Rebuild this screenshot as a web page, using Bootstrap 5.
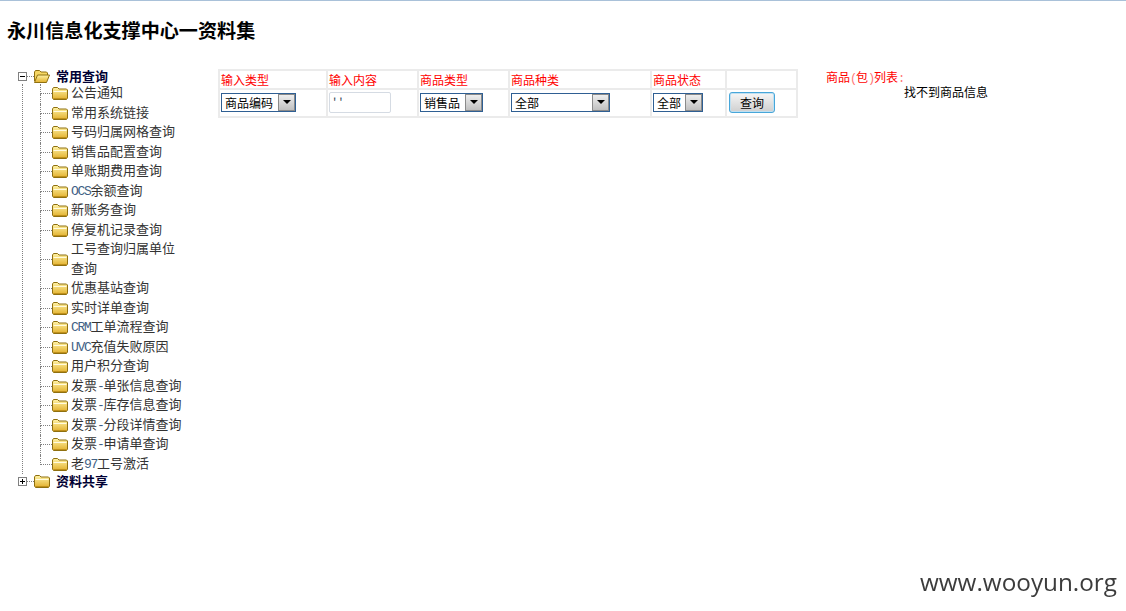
<!DOCTYPE html>
<html lang="zh">
<head>
<meta charset="utf-8">
<title>永川信息化支撑中心</title>
<link rel="stylesheet" href="https://cdn.jsdelivr.net/npm/bootstrap@5.3.0/dist/css/bootstrap.min.css">
<style>
html,body{height:100%}
body{background:#fff;border-top:1px solid #a9c1d9;font-family:"Liberation Mono","Noto Sans CJK SC",monospace;font-size:12px;color:#000;min-height:610px}
.site-title{font-family:"Liberation Serif","Noto Sans CJK SC",serif;font-size:19.1px;font-weight:700;line-height:22px;margin:20px 0 0 7px;color:#000}
.layout{padding:26px 0 0 18px}
.tree-col{width:167px;margin-right:33px;flex:none;font-size:13px;line-height:19.5px;color:#333}
.root-row{height:15px;font-weight:700;color:#003;line-height:15px;font-family:"Liberation Sans","Noto Sans CJK SC",sans-serif}
.root-row svg{flex:none}
.root-name{margin-left:6px}
.kids{margin:0 0 0 4px;padding:0;border-left:1px dotted #808080;list-style:none}
.kids-in{margin:0 0 0 17px;padding:0;list-style:none}
.link-col{width:12px;flex:none}
.link-top{flex:1;border-left:1px dotted #808080;border-bottom:1px dotted #808080}
.link-bot{flex:1;border-left:1px dotted #808080}
.kid:last-child .link-bot{border-left:0}
.kid svg{flex:none;margin-right:3px}
.lat-t{letter-spacing:-1.3px;color:#3f5f85}
.lat-r{font-family:"Liberation Mono",monospace;letter-spacing:-1.2px;color:#f77}
.grid-tb{width:578px;flex:none;table-layout:fixed;border-collapse:collapse;align-self:flex-start;font-family:"Noto Sans CJK SC",sans-serif}
.grid-tb td,.grid-tb th{border:2px solid #ebebeb;padding:0;font-weight:400;vertical-align:middle}
.grid-tb th{color:#f00;height:19px;line-height:17px;padding-left:1px}
.grid-tb td{height:28px;padding-bottom:2px}
.w-a{width:108px}.w-b{width:91px}.w-c{width:91px}.w-d{width:142px}.w-e{width:75px}.w-f{width:71px}
.pick{border:1px solid #2f5f93;height:19px;line-height:17px;background:#fff;padding-left:3px;margin-left:1px}
.pick-a{width:75px}.pick-c{width:63px}.pick-d{width:99px}.pick-e{width:50px}
.pick-txt{flex:1;white-space:nowrap;overflow:hidden}
.pick-btn{width:17px;flex:none;background:linear-gradient(#eee,#c0c0c0);border:1px solid #8a8a8a}
.pick-btn i{border:4px solid transparent;border-top:4px solid #000;border-bottom:0;display:block}
.txt-in{width:62px;height:21px;border:1px solid #d5dbe3;border-radius:2px;padding:0 3px;font:12px "Noto Sans CJK SC",sans-serif;letter-spacing:3px;margin-left:1px;display:block;color:#345}
.go-btn{width:46px;height:21px;margin-left:2px;padding:0;font-size:12px;line-height:17px;color:#000;border:1px solid #47a6d9;border-radius:3px;box-shadow:inset 0 0 0 1px #bfe0f2;background:linear-gradient(#f6f6f6,#cfcfcf);display:block;font-family:"Noto Sans CJK SC",sans-serif}
.result-col{margin-left:28px;font-family:"Noto Sans CJK SC",sans-serif;line-height:15px}
.result-lbl{color:#f00;height:15px}
.result-msg{margin-left:78px}
.mark-w{position:fixed;right:9px;bottom:15px;font-family:"Open Sans",sans-serif;font-size:24.3px;line-height:28px;color:#3c3c3c}
</style>
</head>
<body>
<svg width="0" height="0" class="d-block">
<defs>
<linearGradient id="fg" x1="0" y1="0" x2="0" y2="1"><stop offset="0" stop-color="#fff3a6"/><stop offset="1" stop-color="#e2b02c"/></linearGradient>
<symbol id="f-shut" viewBox="0 0 16 13"><path d="M.5 11V2L1.500.5h4L7 2h7.500l1 1v8l-1 1.500h-13z" fill="url(#fg)" stroke="#8f7010"/><path d="M1.500 4.500h13" stroke="#fffbe0"/><path d="M1.500 11.500h13" stroke="#c0901a"/></symbol>
<symbol id="f-open" viewBox="0 0 16 13"><path d="M.5 11V2l1-1.500h4L7 2h5.500l1 1v2" fill="#f6d765" stroke="#8f7010"/><path d="M.5 12.500L3.500 5h12l-3 7.500z" fill="url(#fg)" stroke="#8f7010"/></symbol>
</defs>
</svg>
<h1 class="site-title">永川信息化支撑中心一资料集</h1>
<div class="layout d-flex align-items-start">
  <nav class="tree-col">
    <div class="root-row d-flex align-items-center">
      <svg width="16" height="9" viewBox="0 0 16 9"><rect x=".5" y=".5" width="8" height="8" fill="#fff" stroke="#808080"/><path d="M2 4.500h5" stroke="#000"/><path d="M9 4.500h7" stroke="#808080" stroke-dasharray="1 1"/></svg>
      <svg width="16" height="13"><use href="#f-open"/></svg>
      <span class="root-name">常用查询</span>
    </div>
    <div class="kids">
      <ul class="kids-in">
        <li class="kid d-flex"><span class="link-col d-flex flex-column"><span class="link-top"></span><span class="link-bot"></span></span><svg class="align-self-center" width="16" height="13"><use href="#f-shut"/></svg><span>公告通知</span></li>
        <li class="kid d-flex"><span class="link-col d-flex flex-column"><span class="link-top"></span><span class="link-bot"></span></span><svg class="align-self-center" width="16" height="13"><use href="#f-shut"/></svg><span>常用系统链接</span></li>
        <li class="kid d-flex"><span class="link-col d-flex flex-column"><span class="link-top"></span><span class="link-bot"></span></span><svg class="align-self-center" width="16" height="13"><use href="#f-shut"/></svg><span>号码归属网格查询</span></li>
        <li class="kid d-flex"><span class="link-col d-flex flex-column"><span class="link-top"></span><span class="link-bot"></span></span><svg class="align-self-center" width="16" height="13"><use href="#f-shut"/></svg><span>销售品配置查询</span></li>
        <li class="kid d-flex"><span class="link-col d-flex flex-column"><span class="link-top"></span><span class="link-bot"></span></span><svg class="align-self-center" width="16" height="13"><use href="#f-shut"/></svg><span>单账期费用查询</span></li>
        <li class="kid d-flex"><span class="link-col d-flex flex-column"><span class="link-top"></span><span class="link-bot"></span></span><svg class="align-self-center" width="16" height="13"><use href="#f-shut"/></svg><span><span class="lat-t">OCS</span>余额查询</span></li>
        <li class="kid d-flex"><span class="link-col d-flex flex-column"><span class="link-top"></span><span class="link-bot"></span></span><svg class="align-self-center" width="16" height="13"><use href="#f-shut"/></svg><span>新账务查询</span></li>
        <li class="kid d-flex"><span class="link-col d-flex flex-column"><span class="link-top"></span><span class="link-bot"></span></span><svg class="align-self-center" width="16" height="13"><use href="#f-shut"/></svg><span>停复机记录查询</span></li>
        <li class="kid d-flex"><span class="link-col d-flex flex-column"><span class="link-top"></span><span class="link-bot"></span></span><svg class="align-self-center" width="16" height="13"><use href="#f-shut"/></svg><span>工号查询归属单位查询</span></li>
        <li class="kid d-flex"><span class="link-col d-flex flex-column"><span class="link-top"></span><span class="link-bot"></span></span><svg class="align-self-center" width="16" height="13"><use href="#f-shut"/></svg><span>优惠基站查询</span></li>
        <li class="kid d-flex"><span class="link-col d-flex flex-column"><span class="link-top"></span><span class="link-bot"></span></span><svg class="align-self-center" width="16" height="13"><use href="#f-shut"/></svg><span>实时详单查询</span></li>
        <li class="kid d-flex"><span class="link-col d-flex flex-column"><span class="link-top"></span><span class="link-bot"></span></span><svg class="align-self-center" width="16" height="13"><use href="#f-shut"/></svg><span><span class="lat-t">CRM</span>工单流程查询</span></li>
        <li class="kid d-flex"><span class="link-col d-flex flex-column"><span class="link-top"></span><span class="link-bot"></span></span><svg class="align-self-center" width="16" height="13"><use href="#f-shut"/></svg><span><span class="lat-t">UVC</span>充值失败原因</span></li>
        <li class="kid d-flex"><span class="link-col d-flex flex-column"><span class="link-top"></span><span class="link-bot"></span></span><svg class="align-self-center" width="16" height="13"><use href="#f-shut"/></svg><span>用户积分查询</span></li>
        <li class="kid d-flex"><span class="link-col d-flex flex-column"><span class="link-top"></span><span class="link-bot"></span></span><svg class="align-self-center" width="16" height="13"><use href="#f-shut"/></svg><span>发票<span class="lat-t">-</span>单张信息查询</span></li>
        <li class="kid d-flex"><span class="link-col d-flex flex-column"><span class="link-top"></span><span class="link-bot"></span></span><svg class="align-self-center" width="16" height="13"><use href="#f-shut"/></svg><span>发票<span class="lat-t">-</span>库存信息查询</span></li>
        <li class="kid d-flex"><span class="link-col d-flex flex-column"><span class="link-top"></span><span class="link-bot"></span></span><svg class="align-self-center" width="16" height="13"><use href="#f-shut"/></svg><span>发票<span class="lat-t">-</span>分段详情查询</span></li>
        <li class="kid d-flex"><span class="link-col d-flex flex-column"><span class="link-top"></span><span class="link-bot"></span></span><svg class="align-self-center" width="16" height="13"><use href="#f-shut"/></svg><span>发票<span class="lat-t">-</span>申请单查询</span></li>
        <li class="kid d-flex"><span class="link-col d-flex flex-column"><span class="link-top"></span><span class="link-bot"></span></span><svg class="align-self-center" width="16" height="13"><use href="#f-shut"/></svg><span>老<span class="lat-t">97</span>工号激活</span></li>
      </ul>
    </div>
    <div class="root-row d-flex align-items-center">
      <svg width="16" height="9" viewBox="0 0 16 9"><rect x=".5" y=".5" width="8" height="8" fill="#fff" stroke="#808080"/><path d="M2 4.500h5M4.500 2v5" stroke="#000"/><path d="M9 4.500h7" stroke="#808080" stroke-dasharray="1 1"/></svg>
      <svg width="16" height="13"><use href="#f-shut"/></svg>
      <span class="root-name">资料共享</span>
    </div>
  </nav>
  <table class="grid-tb">
    <colgroup><col class="w-a"><col class="w-b"><col class="w-c"><col class="w-d"><col class="w-e"><col class="w-f"></colgroup>
    <tr><th>输入类型</th><th>输入内容</th><th>商品类型</th><th>商品种类</th><th>商品状态</th><th></th></tr>
    <tr>
      <td><div class="pick pick-a d-flex"><span class="pick-txt">商品编码</span><span class="pick-btn d-flex align-items-center justify-content-center"><i></i></span></div></td>
      <td><input class="txt-in" type="text" value="''"></td>
      <td><div class="pick pick-c d-flex"><span class="pick-txt">销售品</span><span class="pick-btn d-flex align-items-center justify-content-center"><i></i></span></div></td>
      <td><div class="pick pick-d d-flex"><span class="pick-txt">全部</span><span class="pick-btn d-flex align-items-center justify-content-center"><i></i></span></div></td>
      <td><div class="pick pick-e d-flex"><span class="pick-txt">全部</span><span class="pick-btn d-flex align-items-center justify-content-center"><i></i></span></div></td>
      <td><button class="go-btn" type="button">查询</button></td>
    </tr>
  </table>
  <div class="result-col">
    <div class="result-lbl">商品<span class="lat-r">(</span>包<span class="lat-r">)</span>列表<span class="lat-r">:</span></div>
    <div class="result-msg">找不到商品信息</div>
  </div>
</div>
<div class="mark-w">www.wooyun.org</div>
</body>
</html>
